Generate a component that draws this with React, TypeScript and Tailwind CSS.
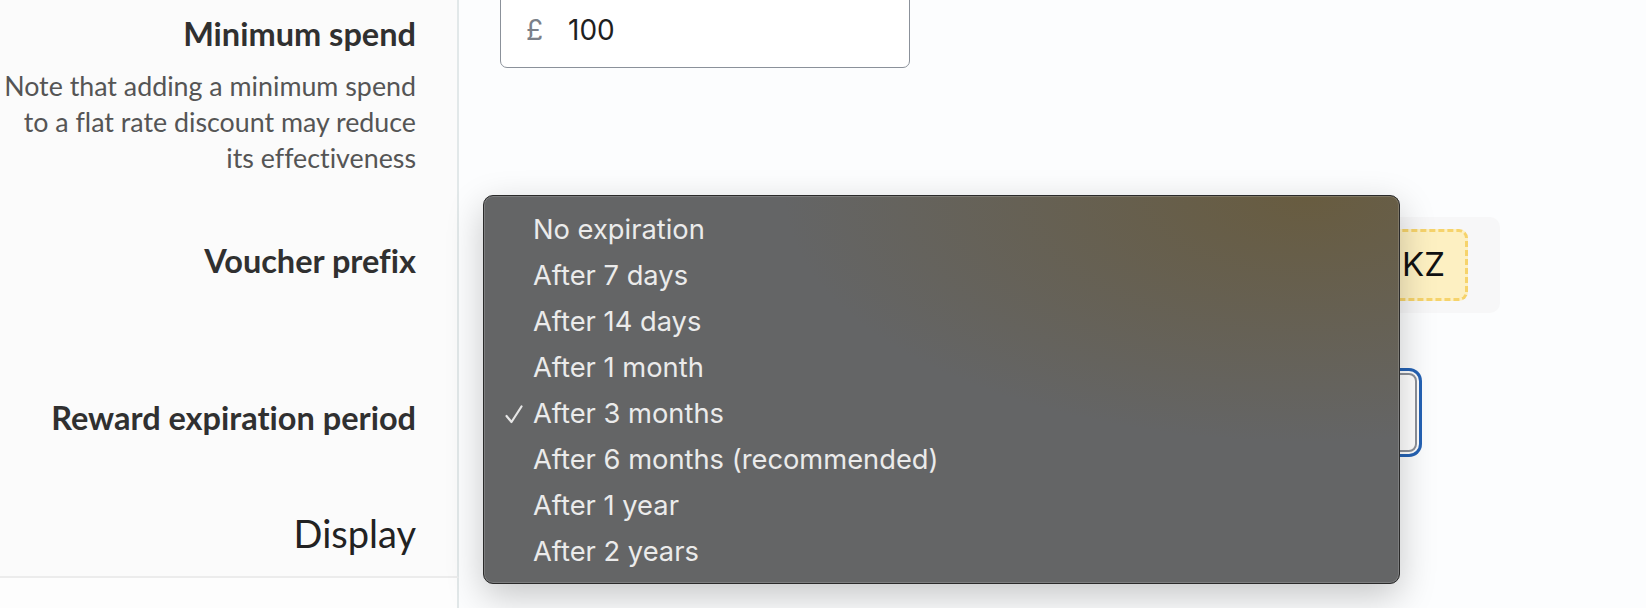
import React from "react";

const OPTIONS = [
  "No expiration",
  "After 7 days",
  "After 14 days",
  "After 1 month",
  "After 3 months",
  "After 6 months (recommended)",
  "After 1 year",
  "After 2 years",
];

const SELECTED = "After 3 months";

function Check() {
  return (
    <svg width="18" height="19" viewBox="0 0 18 19" fill="none" className="shrink-0">
      <path d="M1.5 11 L6.5 17 L16.5 1.5" stroke="#e6e6e6" strokeWidth="2.2" strokeLinecap="round" strokeLinejoin="round" />
    </svg>
  );
}

function ExpirationMenu() {
  return (
    <div className="absolute left-[483px] top-[195px] w-[917px] h-[389px] rounded-[10px] border border-[#2a2a2a] bg-[#646566] bg-[radial-gradient(ellipse_at_90%_0%,rgba(104,92,64,1)_0%,rgba(100,100,100,0)_45%)] shadow-[0_12px_36px_rgba(0,0,0,0.22),inset_0_0_0_1px_rgba(255,255,255,0.16)] pt-[11px] font-['Inter',sans-serif] text-[27.3px] leading-[46px] text-[#ebebeb]">
      {OPTIONS.map((opt) => (
        <div key={opt} className="flex items-center h-[46px]">
          <div className="w-[49px] pl-[21px] flex items-center">
            {opt === SELECTED && <Check />}
          </div>
          <span>{opt}</span>
        </div>
      ))}
    </div>
  );
}

function LabelCell({ children, className = "" }: { children: React.ReactNode; className?: string }) {
  return (
    <div className={`w-[459px] shrink-0 border-r-2 border-[#e2e8e9] bg-[#fbfbfb] pr-[41px] text-right ${className}`}>
      {children}
    </div>
  );
}

export default function App() {
  return (
    <div className="relative w-[1646px] h-[608px] overflow-hidden bg-[#fcfdfe] font-['Lato',sans-serif] [font-variant-ligatures:none]">
      {/* Minimum spend */}
      <div className="flex h-[200px]">
        <LabelCell className="pt-[16px]">
          <p className="text-[32.5px] leading-[36px] font-bold text-[#303030]">Minimum spend</p>
          <p className="mt-[16px] text-[26.8px] leading-[36px] text-[#555]">
            Note that adding a minimum spend
            <br />
            to a flat rate discount may reduce
            <br />
            its effectiveness
          </p>
        </LabelCell>
        <div className="flex-1 pl-[41px]">
          <div className="-mt-[14px] w-[410px] h-[82px] rounded-[7px] border-[1.5px] border-[#8b919a] bg-white flex items-center pt-[5px] font-['Inter',sans-serif] text-[28px]">
            <span className="w-[67px] pl-[25px] text-[#7b8089]">£</span>
            <span className="text-[#1f1f1f]">100</span>
          </div>
        </div>
      </div>

      {/* Voucher prefix */}
      <div className="flex h-[140px]">
        <LabelCell className="pt-[43px]">
          <p className="text-[32.5px] leading-[36px] font-bold text-[#303030]">Voucher prefix</p>
        </LabelCell>
        <div className="flex-1 pl-[41px] pt-[17px]">
          <div className="w-[1000px] h-[96px] rounded-[10px] bg-[#f7f7f8] flex items-center justify-end pr-[32px]">
            <div className="w-[300px] h-[72px] rounded-[9px] border-[3px] border-dashed border-[#f6d36b] bg-[#fdf0c2] flex items-center justify-end pr-[20px] font-['Inter',sans-serif] text-[33px] text-[#111]">
              KZ
            </div>
          </div>
        </div>
      </div>

      {/* Reward expiration period */}
      <div className="flex h-[155px]">
        <LabelCell className="pt-[60px]">
          <p className="text-[32.5px] leading-[36px] font-bold text-[#303030]">Reward expiration period</p>
        </LabelCell>
        <div className="flex-1 pl-[41px] pt-[33px]">
          <div className="w-[917px] h-[79px] rounded-[8px] border-2 border-[#8d9199] bg-white ring-[3px] ring-[#2462b4] ring-offset-[2px] ring-offset-white" />
        </div>
      </div>

      {/* Display section */}
      <div className="flex h-[83px]">
        <LabelCell className="bg-[#f8f8f8] pt-[15px] border-b-2 border-b-[#ececec]">
          <p className="text-[38px] leading-[46px] text-[#222]">Display</p>
        </LabelCell>
        <div className="flex-1" />
      </div>
      <div className="flex h-[40px]">
        <LabelCell className="bg-[#fdfdfd]">{null}</LabelCell>
        <div className="flex-1" />
      </div>

      <ExpirationMenu />
    </div>
  );
}
